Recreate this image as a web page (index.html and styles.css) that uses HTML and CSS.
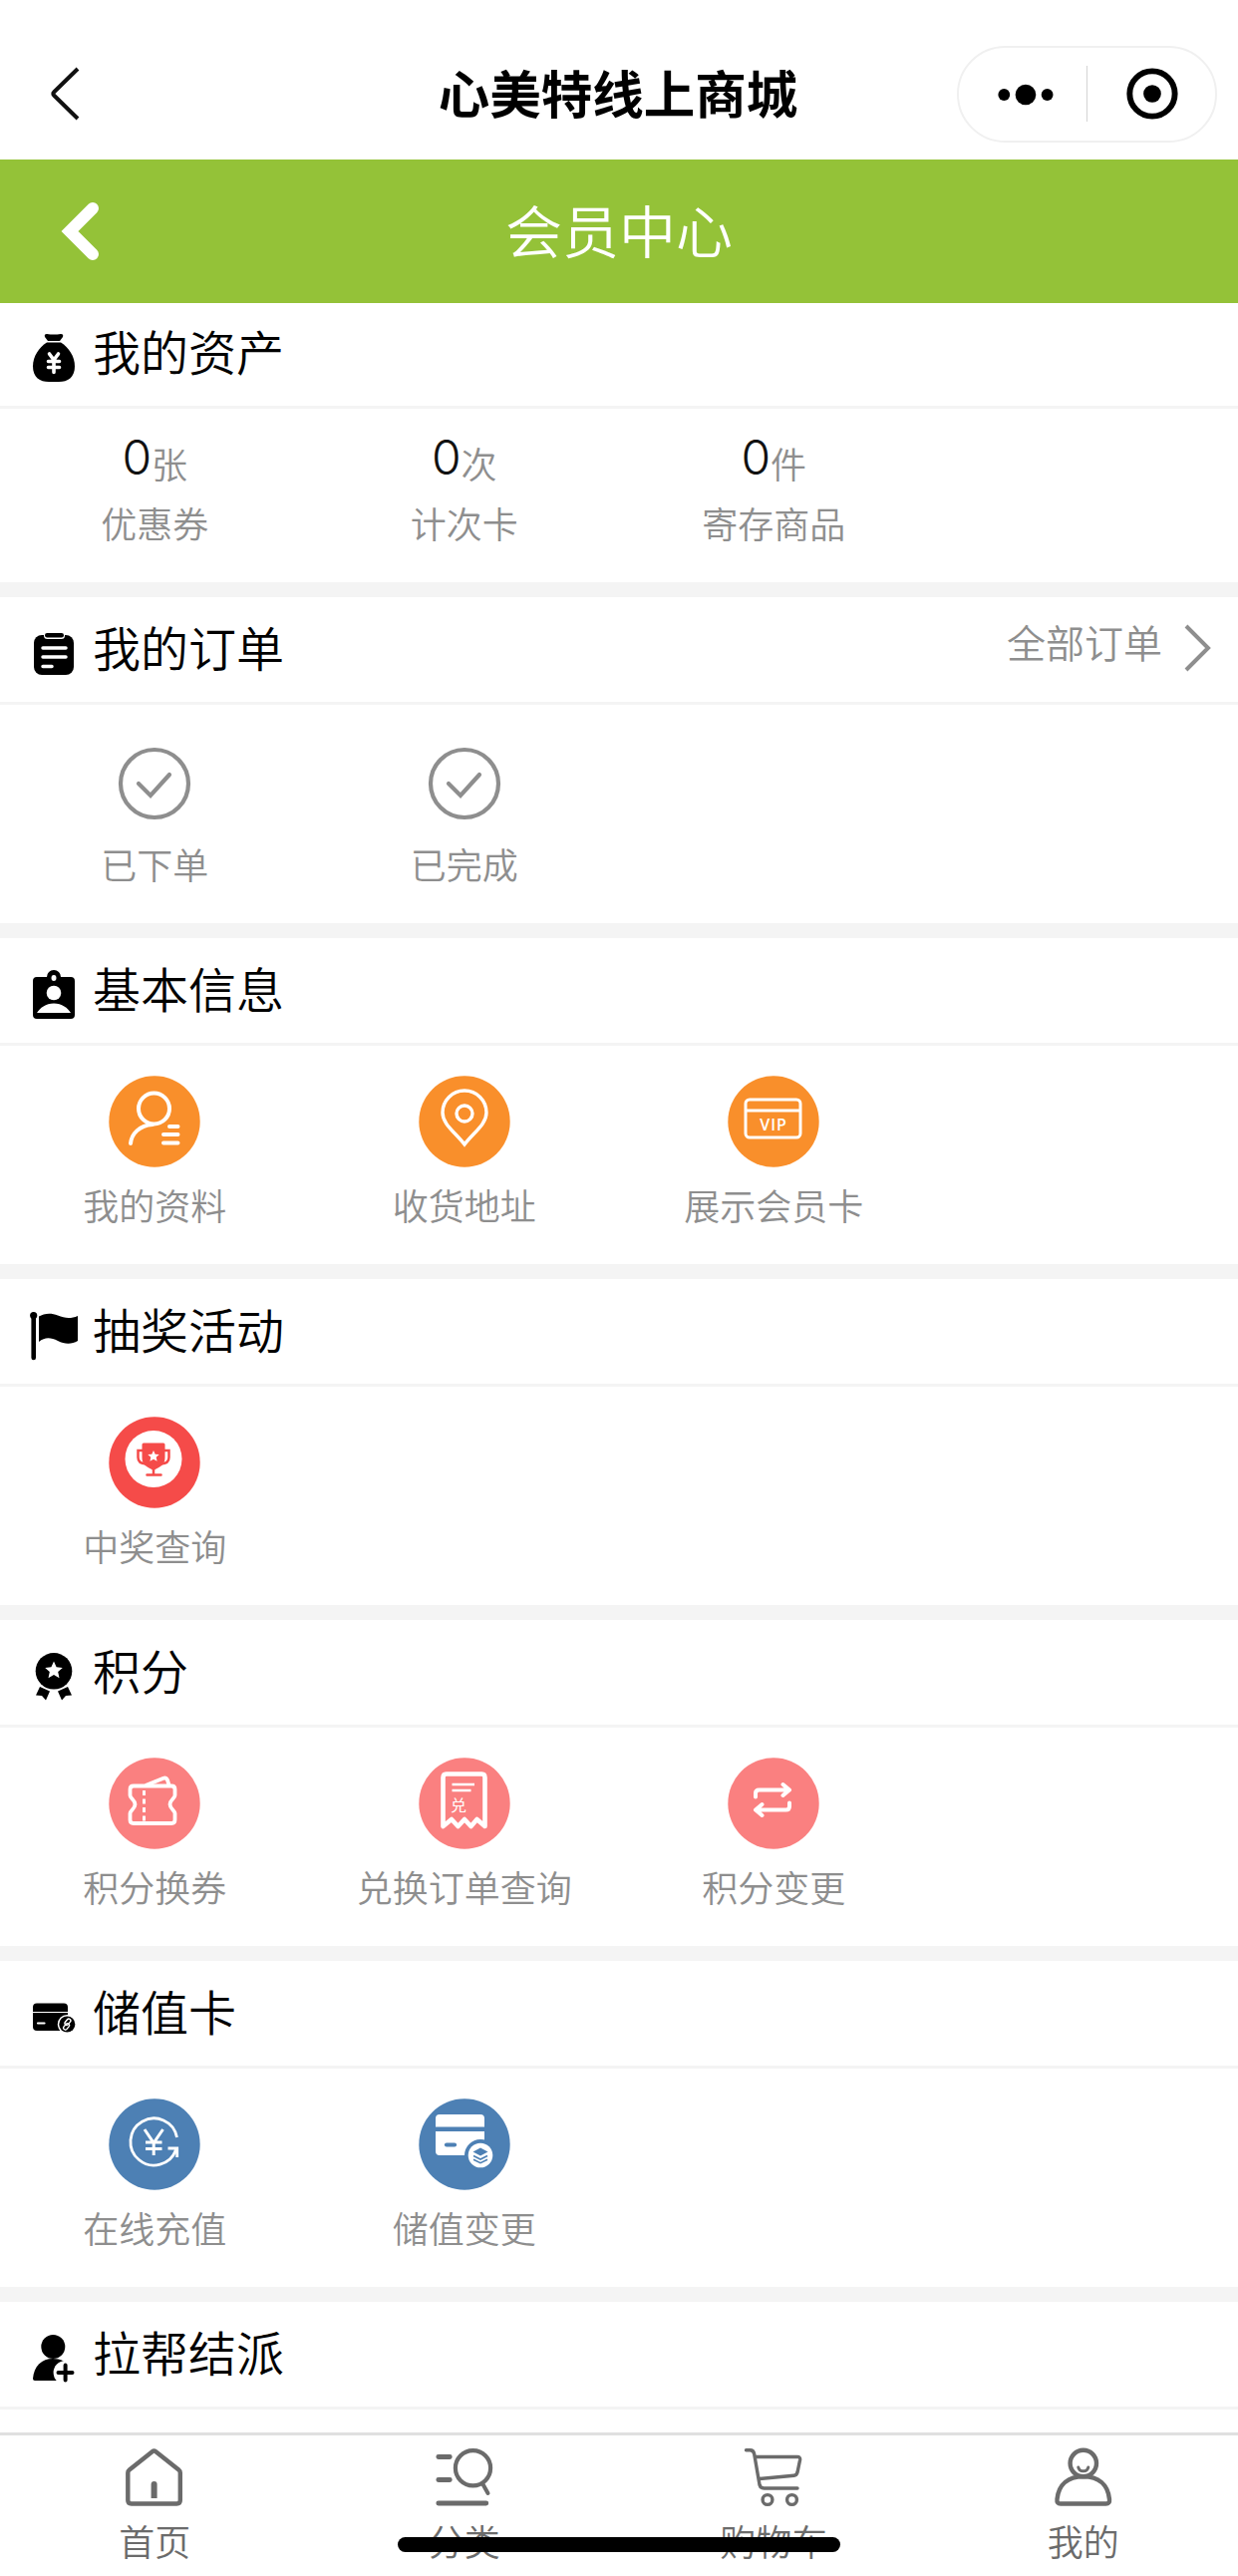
FILE: index.html
```html
<!DOCTYPE html>
<html lang="zh-CN">
<head>
<meta charset="utf-8">
<title>会员中心</title>
<link rel="stylesheet" href="styles.css">
</head>
<body>
<div class="app">
  <header class="topbar">
    <svg class="topbar-back" viewBox="0 0 34 56" fill="none" stroke="#111" stroke-width="4"><path d="M30 3 6 26.500a2 2 0 0 0 0 3L30 53"/></svg>
    <h1 class="topbar-title">心美特线上商城</h1>
    <div class="capsule">
      <svg class="capsule-icon" viewBox="0 0 130 94"><circle cx="46" cy="48" r="6"/><circle cx="68" cy="48" r="10.500"/><circle cx="90" cy="48" r="6"/></svg>
      <i class="capsule-line"></i>
      <svg class="capsule-icon" viewBox="0 0 130 94"><circle cx="66" cy="47" r="23" fill="none" stroke="#000" stroke-width="6"/><circle cx="66" cy="47" r="9"/></svg>
    </div>
  </header>
  <div class="navbar">
    <svg class="navbar-back" viewBox="0 0 50 64" fill="none" stroke="#fff" stroke-width="12" stroke-linecap="round"><path d="M38 9 15 32l23 23"/></svg>
    <h2 class="navbar-title">会员中心</h2>
  </div>

  <main class="content">
    <section class="section section-first">
      <div class="head">
        <svg class="head-icon" viewBox="0 0 54 54"><path d="M20 3q7 1 14 0 3 0 2 3l-3 4H21l-3-4q-1-3 2-3z"/><path d="M20 11.500h14c8 5 14 14 14 24 0 11-7 15.500-16 15.500H22C13 51 6 46.500 6 35.500c0-10 6-19 14-24z"/><g stroke="#fff" stroke-width="3.600" stroke-linecap="round" fill="none"><path d="m22.500 23 4.500 6 4.500-6M27 29v12.500M21.500 30.500h11M21.500 36.500h11"/></g></svg>
        <h3 class="head-title">我的资产</h3>
      </div>
      <div class="grid">
        <a class="item"><p class="count"><b>0</b><span>张</span></p><span class="label">优惠券</span></a>
        <a class="item"><p class="count"><b>0</b><span>次</span></p><span class="label">计次卡</span></a>
        <a class="item"><p class="count"><b>0</b><span>件</span></p><span class="label">寄存商品</span></a>
      </div>
    </section>

    <section class="section">
      <div class="head">
        <svg class="head-icon" viewBox="0 0 54 54"><rect x="7" y="8" width="40" height="40" rx="8"/><rect x="17" y="4.500" width="21" height="7.500" rx="3.500" fill="#fff"/><rect x="18" y="6" width="19" height="4.500" rx="2.200"/><path d="M16 21h23M16 30h23M16 39.500h9" stroke="#fff" stroke-width="3.500" stroke-linecap="round"/></svg>
        <h3 class="head-title">我的订单</h3>
        <a class="more">全部订单<svg class="more-arrow" viewBox="0 0 30 50" fill="none" stroke="#8e8e8e" stroke-width="4"><path d="m3 3 22 22L3 47"/></svg></a>
      </div>
      <div class="grid">
        <a class="item"><svg class="icon" viewBox="0 0 92 92" fill="none" stroke="#8e8e8e" stroke-width="4.200"><circle cx="46" cy="49" r="34"/><path d="m30 49 12 12 19-21" stroke-linecap="round"/></svg><span class="label">已下单</span></a>
        <a class="item"><svg class="icon" viewBox="0 0 92 92" fill="none" stroke="#8e8e8e" stroke-width="4.200"><circle cx="46" cy="49" r="34"/><path d="m30 49 12 12 19-21" stroke-linecap="round"/></svg><span class="label">已完成</span></a>
      </div>
    </section>

    <section class="section">
      <div class="head">
        <svg class="head-icon" viewBox="0 0 54 54"><path fill-rule="evenodd" d="M10 9h10a7 7 0 0 1 14 0h10q4 0 4 4v34q0 4-4 4H10q-4 0-4-4V13q0-4 4-4zm17-2a2.500 3 0 1 0 0 6 2.500 3 0 1 0 0-6z"/><circle cx="27" cy="25" r="7.300" fill="#fff"/><path d="M10 45c3-5 9-9.500 17-9.500S41 40 44 45z" fill="#fff"/></svg>
        <h3 class="head-title">基本信息</h3>
      </div>
      <div class="grid">
        <a class="item"><svg class="icon" viewBox="0 0 92 92" fill="none" stroke="#fff" stroke-width="4" stroke-linecap="round"><circle class="disc orange" cx="46" cy="46" r="45.700"/><circle cx="45.500" cy="33" r="15.500"/><path d="M44 49C31 50 23 58 22 68"/><path d="M61 51h8.500M55 59h14.500M55 67.500h14.500"/></svg><span class="label">我的资料</span></a>
        <a class="item"><svg class="icon" viewBox="0 0 92 92" fill="none" stroke="#fff" stroke-width="3.400"><circle class="disc orange" cx="46" cy="46" r="45.700"/><path d="M46 69C37 57 24 49 24 37a22 22 0 0 1 44 0C68 49 55 57 46 69z"/><circle cx="46" cy="38" r="8"/></svg><span class="label">收货地址</span></a>
        <a class="item"><svg class="icon" viewBox="0 0 92 92" fill="none" stroke="#fff" stroke-width="3"><circle class="disc orange" cx="46" cy="46" r="45.700"/><rect x="18" y="24" width="55" height="38" rx="4"/><path d="M18 35h55"/><text class="vip" x="46" y="55" stroke="none">VIP</text></svg><span class="label">展示会员卡</span></a>
      </div>
    </section>

    <section class="section">
      <div class="head">
        <svg class="head-icon" viewBox="0 0 54 54"><circle cx="6.700" cy="6.500" r="3.600"/><path d="M6.700 6v43" stroke="#000" stroke-width="4.600" stroke-linecap="round"/><path d="M12 7.500C17 4.500 24 3.500 31 6.500s13 3.500 20 .5v25c-6 3.500-13 3.500-20 0S18 28 12 33z"/></svg>
        <h3 class="head-title">抽奖活动</h3>
      </div>
      <div class="grid">
        <a class="item"><svg class="icon" viewBox="0 0 92 92"><circle class="disc red" cx="46" cy="46" r="45.700"/><circle cx="45" cy="42.500" r="28.500" fill="#fff"/><g fill="none" stroke="#f54b49" stroke-width="2.500" stroke-linecap="round"><path d="M34 34h-4.500v7q0 6 8 6.500M56 34h4.500v7q0 6-8 6.500M45 52v6M38.500 58.500h14"/></g><path d="M35 26.500h20q1.500 0 1.500 1.500v13c0 7-4 9-11.500 13-7.500-4-11.500-6-11.500-13V28q0-1.500 1.500-1.500z" fill="#f54b49"/><path d="m45 34 1.700 3.700 4 .4-3 2.700.9 4-3.600-2.100-3.600 2.100.9-4-3-2.700 4-.4z" fill="#fff"/></svg><span class="label">中奖查询</span></a>
      </div>
    </section>

    <section class="section">
      <div class="head">
        <svg class="head-icon" viewBox="0 0 54 54"><circle cx="27" cy="21.300" r="18.300"/><path d="m27 11.500 2.600 5.700 6.200.7-4.600 4.200 1.300 6.100-5.500-3.100-5.500 3.100 1.300-6.100-4.600-4.200 6.200-.7z" fill="#fff"/><path d="m13 37 10 4.500-4 9-4-4.500-6-.5zM41 37l-10 4.500 4 9 4-4.500 6-.5z"/></svg>
        <h3 class="head-title">积分</h3>
      </div>
      <div class="grid">
        <a class="item"><svg class="icon" viewBox="0 0 92 92" fill="none" stroke="#fff" stroke-width="3.800" stroke-linejoin="round"><circle class="disc pink" cx="46" cy="46" r="45.700"/><path d="M25 28.500h38q3.500 0 3.500 3.500v6c0 3-5 4.500-5 9s5 6 5 9v6.500q0 3.500-3.500 3.500H25q-3.500 0-3.500-3.500V56c0-3 5-4.500 5-9s-5-6-5-9v-6q0-3.500 3.500-3.500z"/><path d="m37 28 18-7.300q3-1 4 2l1.500 4.800"/><path d="M35.500 33v33" stroke-width="3" stroke-dasharray="5 3.500"/></svg><span class="label">积分换券</span></a>
        <a class="item"><svg class="icon" viewBox="0 0 92 92" fill="none" stroke="#fff" stroke-width="4.600" stroke-linejoin="round"><circle class="disc pink" cx="46" cy="46" r="45.700"/><path d="M24.500 69V20q0-3.500 3.500-3.500h35q3.500 0 3.500 3.500v49l-8-7-6 7-6.500-7-6.500 7-6.500-7z"/><path d="M33.500 27h22.500M33.500 33h19" stroke-width="2.400"/><text class="dui" x="40" y="54" stroke="none">兑</text></svg><span class="label">兑换订单查询</span></a>
        <a class="item"><svg class="icon" viewBox="0 0 92 92" fill="none" stroke="#fff" stroke-width="4" stroke-linecap="round" stroke-linejoin="round"><circle class="disc pink" cx="46" cy="46" r="45.700"/><path d="M28 39.500V36q0-3.500 3.500-3.500H61M55.500 27l6.500 5.500-6.500 5.500M62 45.500V49q0 3.500-3.500 3.500H29M34.500 47 28 52.500l6.500 5.500"/></svg><span class="label">积分变更</span></a>
      </div>
    </section>

    <section class="section">
      <div class="head">
        <svg class="head-icon" viewBox="0 0 54 54"><rect x="6" y="12.500" width="35" height="27.500" rx="4"/><path d="M6 21.500h35" stroke="#fff" stroke-width="1.200"/><path d="M11 32.500h6.500" stroke="#fff" stroke-width="2.200" stroke-linecap="round"/><circle cx="40.300" cy="33.500" r="9.500" fill="#fff"/><circle cx="40.300" cy="33.500" r="8"/><g fill="none" stroke="#fff" stroke-width="1.400" transform="rotate(-50 40.300 33.500)"><rect x="34.500" y="32.600" width="7" height="3.800" rx="1.900"/><rect x="39" y="30.600" width="7" height="3.800" rx="1.900"/></g></svg>
        <h3 class="head-title">储值卡</h3>
      </div>
      <div class="grid">
        <a class="item"><svg class="icon" viewBox="0 0 92 92" fill="none" stroke="#fff" stroke-width="2.800"><circle class="disc blue" cx="46" cy="46" r="45.700"/><path d="M68.500 39A23.500 23.500 0 1 0 67.500 51.500M59.500 50h9.200v9"/><path d="m36 31 9.200 13.500L54.500 31M45.200 44v13M37 44h16.500M37 50.500h16.500" stroke-width="3"/></svg><span class="label">在线充值</span></a>
        <a class="item"><svg class="icon" viewBox="0 0 92 92"><circle class="disc blue" cx="46" cy="46" r="45.700"/><path d="M21 16h41q4 0 4 4v8.500H17V20q0-4 4-4zM17 33h49v20q0 4-4 4H21q-4 0-4-4z" fill="#fff"/><path d="M28 46.500h8" stroke="#4d80b4" stroke-width="4.200" stroke-linecap="round"/><circle class="blue" cx="62" cy="57" r="16"/><circle cx="62" cy="57" r="12.300" fill="#fff"/><path d="m54.500 53.500 7.500-4 7.500 4-7.500 4z" fill="#4d80b4"/><path d="m55 57.500 7 3.500 7-3.500M55 61.200l7 3.500 7-3.500" fill="none" stroke="#4d80b4" stroke-width="1.600"/></svg><span class="label">储值变更</span></a>
      </div>
    </section>

    <section class="section">
      <div class="head">
        <svg class="head-icon" viewBox="0 0 54 54"><circle cx="26.300" cy="15" r="12"/><path d="M6 47c1-13 9-20 20-20 8 0 14 3 18 9v13H8q-2 0-2-2z"/><circle cx="38.600" cy="41" r="12" fill="#fff"/><path d="M38.600 33.500v15M31.500 41h14" stroke="#000" stroke-width="4" stroke-linecap="round"/></svg>
        <h3 class="head-title">拉帮结派</h3>
      </div>
    </section>
  </main>

  <nav class="tabbar">
    <a class="tab"><svg class="tab-icon" viewBox="0 0 60 60" stroke-width="4.400"><path d="m27.800 4.200-23 18.300q-1.500 1.200-1.500 3V53q0 3.500 3.500 3.500h45.500q3.500 0 3.500-3.500V25.500q0-1.800-1.500-3L31.300 4.200q-1.800-1.400-3.500 0z"/><path d="M26.600 51V37a3 3 0 0 1 6 0v14z" fill="#6b6b6b" stroke="none"/></svg><span>首页</span></a>
    <a class="tab"><svg class="tab-icon" viewBox="0 0 60 60" stroke-width="4.800" stroke-linecap="round"><path d="M3.800 9.500h11.500M3.800 32.500h11.500M3.800 56h48"/><circle cx="38.500" cy="20.700" r="17.600" stroke-width="4.200"/><path d="m48.500 37 5 9" stroke-width="4"/></svg><span>分类</span></a>
    <a class="tab"><svg class="tab-icon" viewBox="0 0 60 60" stroke-width="3.400" stroke-linecap="round"><path d="M2.500 2.800h4q3.500 0 4.200 4L16 37.500q.8 3.500 4.500 3.500H54M11.500 9.500H54q3 0 2.600 3L54 25q-.8 3-3.500 3.300L16 31.500"/><circle cx="24" cy="52.500" r="4.900"/><circle cx="48.500" cy="52.500" r="4.900"/></svg><span>购物车</span></a>
    <a class="tab"><svg class="tab-icon" viewBox="0 0 60 60" stroke-width="4.400" stroke-linecap="round"><circle cx="29.800" cy="16" r="13.200"/><path d="M24.800 20c1 5 9 5 10 0" stroke-width="3"/><path d="M7 56.500q-4 0-3.500-4.500C5 37 15 29.300 29.800 29.300S54.500 37 56 52q.5 4.500-3.500 4.500z"/></svg><span>我的</span></a>
    <i class="home-indicator"></i>
  </nav>
</div>
</body>
</html>
```
FILE: styles.css
```css
* { box-sizing: border-box; margin: 0; padding: 0; }
body { background: #fff; color: #000; font-family: "Noto Sans CJK SC", sans-serif; font-weight: 350; }
svg { display: block; flex: none; }
.app { height: 2584px; display: flex; flex-direction: column; overflow: hidden; }

.topbar { flex: none; height: 160px; padding: 28px 21px 0 48px; display: grid; grid-template-columns: 261px 1fr 261px; align-items: center; }
.topbar-back { width: 34px; height: 56px; }
.topbar-title { margin-top: -4px; font-size: 51.5px; line-height: 72px; font-weight: 700; text-align: center; padding-right: 29px; white-space: nowrap; }
.capsule { height: 97px; display: flex; align-items: center; border: 2px solid #f0f0f0; border-radius: 49px; }
.capsule-icon { flex: 1; min-width: 0; height: 94px; }
.capsule-line { width: 1px; height: 56px; background: #d4d4d4; }

.navbar { flex: none; height: 144px; padding: 0 55px; display: grid; grid-template-columns: 50px 1fr 50px; align-items: center; background: #94c238; color: #fff; }
.navbar-back { width: 50px; height: 64px; }
.navbar-title { margin-top: -6px; font-size: 57px; line-height: 80px; font-weight: 350; text-align: center; }

.content { flex: 1; min-height: 0; overflow: hidden; }
.section { height: 342px; border-bottom: 15px solid #f4f4f4; }
.section-first { height: 295px; }
.head { height: 108px; padding: 0 25px 0 27px; display: flex; align-items: flex-start; border-bottom: 3px solid #f4f4f4; }
.section-first .head { height: 106px; }
.section-first .head-icon { margin-top: 28px; }
.section-first .head-title { margin-top: 11px; }
.head-icon { width: 54px; height: 54px; margin: 30px 12px 0 0; }
.head-title { margin-top: 13px; font-size: 48px; line-height: 72px; font-weight: 350; }
.more { margin: 20px 0 0 auto; display: flex; gap: 21px; font-size: 39px; line-height: 48px; color: #8e8e8e; }
.more-arrow { width: 30px; height: 50px; margin-top: 6px; }
.grid { display: grid; grid-template-columns: repeat(4, 1fr); }
.item { display: flex; flex-direction: column; align-items: center; padding-top: 30px; }
.icon { width: 92px; height: 92px; }
.label { margin-top: 10px; font-size: 36px; line-height: 54px; color: #8e8e8e; white-space: nowrap; }
.section-first .item { padding-top: 20px; }
.section-first .label { margin-top: 5px; }
.count { height: 62px; display: flex; align-items: center; line-height: 62px; }
.count b { font-family: Inter, sans-serif; font-size: 48px; font-weight: 350; color: #111; padding-bottom: 5px; }
.count span { font-size: 36px; color: #8e8e8e; padding-top: 6px; }

.disc { stroke: none; }
.orange { fill: #f98f2b; }
.red { fill: #f54b49; }
.pink { fill: #fa8080; }
.blue { fill: #4d80b4; }
.vip { font: 600 16px "Open Sans", sans-serif; letter-spacing: 1px; text-anchor: middle; fill: #fff; }
.dui { font-size: 16px; font-weight: 400; text-anchor: middle; fill: #fff; }

.tabbar { flex: none; position: relative; height: 144px; padding-top: 12px; display: grid; grid-template-columns: repeat(4, 1fr); border-top: 3px solid #e0e0e0; background: #fff; }
.tab { display: flex; flex-direction: column; align-items: center; font-size: 36px; line-height: 54px; color: #6b6b6b; }
.tab span { margin-top: 6px; }
.tab-icon { width: 60px; height: 60px; fill: none; stroke: #6b6b6b; }
.home-indicator { position: absolute; left: 399px; top: 102px; width: 444px; height: 15px; border-radius: 8px; background: #000; }
```
